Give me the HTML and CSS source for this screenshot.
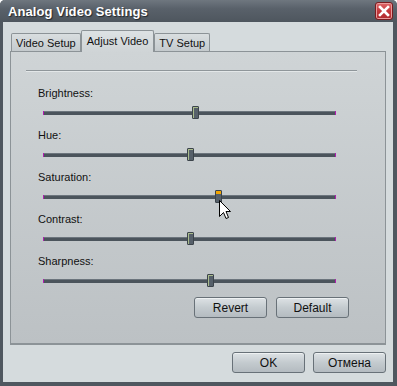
FILE: index.html
```html
<!DOCTYPE html>
<html lang="en">

<head>
  <meta charset="UTF-8">
  <title>Analog Video Settings</title>
  <link rel="stylesheet" href="styles.css">
</head>

<body>
  <div class="window">
    <header class="titlebar">
      <h1>Analog Video Settings</h1>
      <button class="close" aria-label="Close">
        <svg viewBox="0 0 12 12" width="12" height="12">
          <path d="M2 2 L10 10 M10 2 L2 10" stroke="#fff" stroke-width="2.6" stroke-linecap="square"/>
        </svg>
      </button>
    </header>

    <main class="content">
      <nav class="tabs">
        <span class="tab">Video Setup</span>
        <span class="tab active">Adjust Video</span>
        <span class="tab">TV Setup</span>
      </nav>

      <section class="panel">
        <hr class="sep">

        <div class="setting">
          <label>Brightness:</label>
          <div class="track"><span class="thumb" style="left: 149px"></span></div>
        </div>

        <div class="setting">
          <label>Hue:</label>
          <div class="track"><span class="thumb" style="left: 144px"></span></div>
        </div>

        <div class="setting">
          <label>Saturation:</label>
          <div class="track"><span class="thumb hot" style="left: 172px"></span></div>
        </div>

        <div class="setting">
          <label>Contrast:</label>
          <div class="track"><span class="thumb" style="left: 144px"></span></div>
        </div>

        <div class="setting">
          <label>Sharpness:</label>
          <div class="track"><span class="thumb" style="left: 164px"></span></div>
        </div>

        <div class="panel-buttons">
          <button class="btn">Revert</button>
          <button class="btn">Default</button>
        </div>
      </section>

      <footer class="footer">
        <button class="btn">OK</button>
        <button class="btn">Отмена</button>
      </footer>
    </main>

    <svg class="cursor" viewBox="0 0 12 20" width="12" height="20">
      <path d="M0.5 0.5 L0.5 16.5 L4.5 12.5 L7 18.5 L9.5 17.5 L7 11.5 L11.5 11.5 Z" fill="#fff" stroke="#000" stroke-width="1"/>
    </svg>
  </div>
</body>

</html>
```

FILE: styles.css
```css
:root {
  --frame: #4f575f;
  --face: #d5dbdd;
  --edge: #8c9397;
  --text: #111;
}

body {
  margin: 0;
  font-family: "Liberation Sans", Arial, sans-serif;
  font-size: 11px;
  color: var(--text);
}

.window {
  position: relative;
  box-sizing: border-box;
  inline-size: 397px;
  block-size: 386px;
  background: var(--face);
  border: solid var(--frame);
  border-width: 0 4px 4px 3px;
  border-radius: 5px 5px 0 0;
}

.titlebar {
  display: flex;
  align-items: center;
  justify-content: space-between;
  block-size: 22px;
  margin-inline: -3px -4px;
  padding-inline: 8px 4px;
  background: linear-gradient(#6f777f, #59616a 40%, #4e565e);
  border-radius: 5px 5px 0 0;
}

.titlebar h1 {
  margin: 0;
  font-size: 13px;
  font-weight: 700;
  color: #fff;
  text-shadow: 1px 1px 1px #22272c;
  letter-spacing: 0.1px;
}

.close {
  display: flex;
  align-items: center;
  justify-content: center;
  inline-size: 18px;
  block-size: 18px;
  padding: 0;
  border: 1px solid #7a1c20;
  border-radius: 3px;
  background: linear-gradient(#e06a6c, #c3373b 50%, #b02a2f);
  box-shadow: inset 0 0 0 1px #e99a9b;
}

.content {
  padding: 8px 7px 0;
}

.tabs {
  display: flex;
  align-items: flex-end;
  padding-inline-start: 1px;
  block-size: 21px;
  position: relative;
  z-index: 1;
}

.tab {
  box-sizing: border-box;
  block-size: 18px;
  padding: 1px 4px 0;
  line-height: 16px;
  font-size: 11px;
  background: linear-gradient(#d9dee0, #c4cacd);
  border: 1px solid var(--edge);
  border-block-end: none;
  border-radius: 2px 2px 0 0;
}

.tab.active {
  block-size: 22px;
  margin-block-end: -1px;
  padding: 2px 5px 0;
  background: linear-gradient(#dde2e4, #cfd4d6);
}

.panel {
  box-sizing: border-box;
  block-size: 294px;
  padding: 18px 36px 0 27px;
  background: linear-gradient(#cfd4d6, #bcc1c4);
  border: 1px solid var(--edge);
  border-block-end-width: 2px;
}

.sep {
  margin: 0 -8px 0 -12px;
  border: none;
  border-block-start: 1px solid #8f969a;
  border-block-end: 1px solid #e3e7e8;
}

.setting {
  display: flex;
  flex-direction: column;
  gap: 6px;
}

.sep+.setting {
  margin-block-start: 15px;
}

.setting+.setting {
  margin-block-start: 10px;
}

.setting label {
  line-height: 13px;
  font-size: 11px;
}

.track {
  position: relative;
  block-size: 13px;
  margin-inline: 5px 13px;
}

.track::before {
  content: "";
  position: absolute;
  inset-inline: 0;
  inset-block-start: 5px;
  block-size: 4px;
  background: linear-gradient(#6c757d 0 1px, #4b545c 1px);
  border-inline: 1px solid #b01ab0;
}

.thumb {
  position: absolute;
  inset-block-start: 0;
  box-sizing: border-box;
  inline-size: 7px;
  block-size: 13px;
  background: #56606a;
  border: 1px solid #3c444b;
  border-radius: 1px;
  box-shadow: inset 2px 2px 0 -1px #a9bb8c;
}

.thumb.hot {
  box-shadow: inset 0 4px 0 -1px #f3a500;
}

.panel-buttons {
  display: flex;
  justify-content: flex-end;
  gap: 9px;
  margin-block-start: 10px;
}

.btn {
  box-sizing: border-box;
  inline-size: 73px;
  block-size: 21px;
  padding: 0;
  font-family: inherit;
  font-size: 12px;
  color: var(--text);
  background: linear-gradient(#dde2e5, #c4cbcf 50%, #b4bbc0);
  border: 1px solid #687178;
  border-radius: 3px;
  box-shadow: inset 0 1px 0 #eef1f2;
}

.footer {
  display: flex;
  justify-content: flex-end;
  gap: 8px;
  margin-block-start: 7px;
}

.cursor {
  position: absolute;
  left: 216px;
  top: 200px;
}
```
